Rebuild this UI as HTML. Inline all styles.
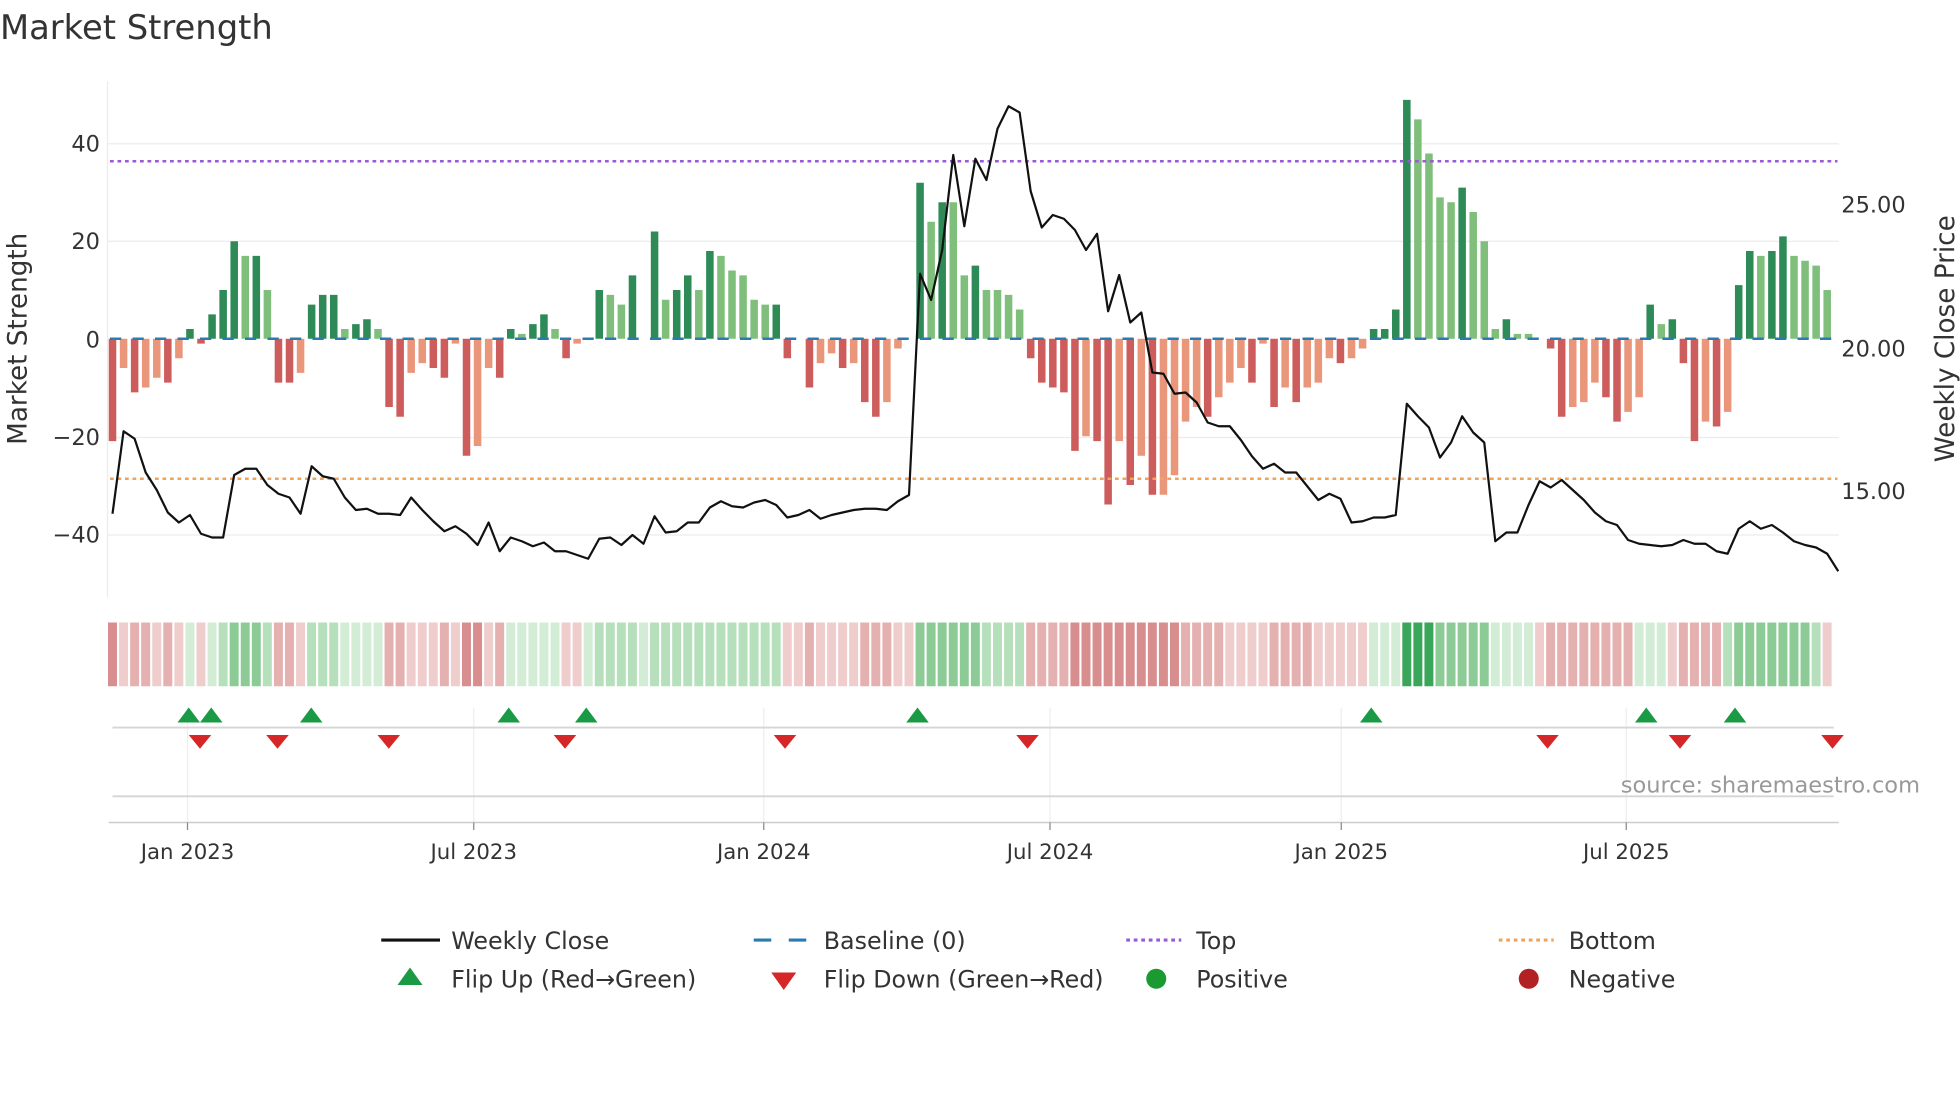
<!DOCTYPE html>
<html><head><meta charset="utf-8"><style>
html,body{margin:0;padding:0;background:#fff;width:1960px;height:1102px;overflow:hidden}
svg{display:block}
text{font-family:"DejaVu Sans","Liberation Sans",sans-serif;fill:#333}
.G{fill:#2e8b57}.g{fill:#7fbf7b}.R{fill:#cd5c5c}.r{fill:#e9967a}
.h5{fill:#3aa65a}.h4{fill:#8ccb95}.h3{fill:#b6dfbc}.h2{fill:#d3ecd6}
.n1{fill:#d88e8e}.n2{fill:#e5b0b0}.n3{fill:#efcdcd}
</style></head><body>
<svg width="1960" height="1102" viewBox="0 0 1568 881.6" xmlns="http://www.w3.org/2000/svg">
<rect width="1568" height="882" fill="#fff"/>
<text x="0" y="31" font-size="27">Market Strength</text>
<g stroke="#ececec" stroke-width="1">
<line x1="86" x2="1471" y1="115" y2="115"/><line x1="86" x2="1471" y1="193" y2="193"/>
<line x1="86" x2="1471" y1="350" y2="350"/><line x1="86" x2="1471" y1="428" y2="428"/>
<line x1="86" x2="86" y1="65" y2="478"/>
</g>
<g font-size="18" text-anchor="end">
<text x="80" y="121">40</text><text x="80" y="199">20</text><text x="80" y="278">0</text>
<text x="80" y="356">−20</text><text x="80" y="434">−40</text>
</g>
<g font-size="18">
<text x="1473" y="170">25.00</text><text x="1473" y="285">20.00</text><text x="1473" y="399">15.00</text>
</g>
<text font-size="21" transform="translate(21,271) rotate(-90)" text-anchor="middle">Market Strength</text>
<text font-size="21" transform="translate(1563,271) rotate(-90)" text-anchor="middle">Weekly Close Price</text>

<g transform="translate(87,271) scale(8.85,-3.9)">
<rect class="R" x="0" y="-21" width=".68" height="21"/>
<rect class="r" x="1" y="-6" width=".68" height="6"/>
<rect class="R" x="2" y="-11" width=".68" height="11"/>
<rect class="r" x="3" y="-10" width=".68" height="10"/>
<rect class="r" x="4" y="-8" width=".68" height="8"/>
<rect class="R" x="5" y="-9" width=".68" height="9"/>
<rect class="r" x="6" y="-4" width=".68" height="4"/>
<rect class="G" x="7" y="0" width=".68" height="2"/>
<rect class="R" x="8" y="-1" width=".68" height="1"/>
<rect class="G" x="9" y="0" width=".68" height="5"/>
<rect class="G" x="10" y="0" width=".68" height="10"/>
<rect class="G" x="11" y="0" width=".68" height="20"/>
<rect class="g" x="12" y="0" width=".68" height="17"/>
<rect class="G" x="13" y="0" width=".68" height="17"/>
<rect class="g" x="14" y="0" width=".68" height="10"/>
<rect class="R" x="15" y="-9" width=".68" height="9"/>
<rect class="R" x="16" y="-9" width=".68" height="9"/>
<rect class="r" x="17" y="-7" width=".68" height="7"/>
<rect class="G" x="18" y="0" width=".68" height="7"/>
<rect class="G" x="19" y="0" width=".68" height="9"/>
<rect class="G" x="20" y="0" width=".68" height="9"/>
<rect class="g" x="21" y="0" width=".68" height="2"/>
<rect class="G" x="22" y="0" width=".68" height="3"/>
<rect class="G" x="23" y="0" width=".68" height="4"/>
<rect class="g" x="24" y="0" width=".68" height="2"/>
<rect class="R" x="25" y="-14" width=".68" height="14"/>
<rect class="R" x="26" y="-16" width=".68" height="16"/>
<rect class="r" x="27" y="-7" width=".68" height="7"/>
<rect class="r" x="28" y="-5" width=".68" height="5"/>
<rect class="R" x="29" y="-6" width=".68" height="6"/>
<rect class="R" x="30" y="-8" width=".68" height="8"/>
<rect class="r" x="31" y="-1" width=".68" height="1"/>
<rect class="R" x="32" y="-24" width=".68" height="24"/>
<rect class="r" x="33" y="-22" width=".68" height="22"/>
<rect class="r" x="34" y="-6" width=".68" height="6"/>
<rect class="R" x="35" y="-8" width=".68" height="8"/>
<rect class="G" x="36" y="0" width=".68" height="2"/>
<rect class="g" x="37" y="0" width=".68" height="1"/>
<rect class="G" x="38" y="0" width=".68" height="3"/>
<rect class="G" x="39" y="0" width=".68" height="5"/>
<rect class="g" x="40" y="0" width=".68" height="2"/>
<rect class="R" x="41" y="-4" width=".68" height="4"/>
<rect class="r" x="42" y="-1" width=".68" height="1"/>
<rect class="G" x="44" y="0" width=".68" height="10"/>
<rect class="g" x="45" y="0" width=".68" height="9"/>
<rect class="g" x="46" y="0" width=".68" height="7"/>
<rect class="G" x="47" y="0" width=".68" height="13"/>
<rect class="G" x="49" y="0" width=".68" height="22"/>
<rect class="g" x="50" y="0" width=".68" height="8"/>
<rect class="G" x="51" y="0" width=".68" height="10"/>
<rect class="G" x="52" y="0" width=".68" height="13"/>
<rect class="g" x="53" y="0" width=".68" height="10"/>
<rect class="G" x="54" y="0" width=".68" height="18"/>
<rect class="g" x="55" y="0" width=".68" height="17"/>
<rect class="g" x="56" y="0" width=".68" height="14"/>
<rect class="g" x="57" y="0" width=".68" height="13"/>
<rect class="g" x="58" y="0" width=".68" height="8"/>
<rect class="g" x="59" y="0" width=".68" height="7"/>
<rect class="G" x="60" y="0" width=".68" height="7"/>
<rect class="R" x="61" y="-4" width=".68" height="4"/>
<rect class="R" x="63" y="-10" width=".68" height="10"/>
<rect class="r" x="64" y="-5" width=".68" height="5"/>
<rect class="r" x="65" y="-3" width=".68" height="3"/>
<rect class="R" x="66" y="-6" width=".68" height="6"/>
<rect class="r" x="67" y="-5" width=".68" height="5"/>
<rect class="R" x="68" y="-13" width=".68" height="13"/>
<rect class="R" x="69" y="-16" width=".68" height="16"/>
<rect class="r" x="70" y="-13" width=".68" height="13"/>
<rect class="r" x="71" y="-2" width=".68" height="2"/>
<rect class="G" x="73" y="0" width=".68" height="32"/>
<rect class="g" x="74" y="0" width=".68" height="24"/>
<rect class="G" x="75" y="0" width=".68" height="28"/>
<rect class="g" x="76" y="0" width=".68" height="28"/>
<rect class="g" x="77" y="0" width=".68" height="13"/>
<rect class="G" x="78" y="0" width=".68" height="15"/>
<rect class="g" x="79" y="0" width=".68" height="10"/>
<rect class="g" x="80" y="0" width=".68" height="10"/>
<rect class="g" x="81" y="0" width=".68" height="9"/>
<rect class="g" x="82" y="0" width=".68" height="6"/>
<rect class="R" x="83" y="-4" width=".68" height="4"/>
<rect class="R" x="84" y="-9" width=".68" height="9"/>
<rect class="R" x="85" y="-10" width=".68" height="10"/>
<rect class="R" x="86" y="-11" width=".68" height="11"/>
<rect class="R" x="87" y="-23" width=".68" height="23"/>
<rect class="r" x="88" y="-20" width=".68" height="20"/>
<rect class="R" x="89" y="-21" width=".68" height="21"/>
<rect class="R" x="90" y="-34" width=".68" height="34"/>
<rect class="r" x="91" y="-21" width=".68" height="21"/>
<rect class="R" x="92" y="-30" width=".68" height="30"/>
<rect class="r" x="93" y="-24" width=".68" height="24"/>
<rect class="R" x="94" y="-32" width=".68" height="32"/>
<rect class="r" x="95" y="-32" width=".68" height="32"/>
<rect class="r" x="96" y="-28" width=".68" height="28"/>
<rect class="r" x="97" y="-17" width=".68" height="17"/>
<rect class="r" x="98" y="-14" width=".68" height="14"/>
<rect class="R" x="99" y="-16" width=".68" height="16"/>
<rect class="r" x="100" y="-12" width=".68" height="12"/>
<rect class="r" x="101" y="-9" width=".68" height="9"/>
<rect class="r" x="102" y="-6" width=".68" height="6"/>
<rect class="R" x="103" y="-9" width=".68" height="9"/>
<rect class="r" x="104" y="-1" width=".68" height="1"/>
<rect class="R" x="105" y="-14" width=".68" height="14"/>
<rect class="r" x="106" y="-10" width=".68" height="10"/>
<rect class="R" x="107" y="-13" width=".68" height="13"/>
<rect class="r" x="108" y="-10" width=".68" height="10"/>
<rect class="r" x="109" y="-9" width=".68" height="9"/>
<rect class="r" x="110" y="-4" width=".68" height="4"/>
<rect class="R" x="111" y="-5" width=".68" height="5"/>
<rect class="r" x="112" y="-4" width=".68" height="4"/>
<rect class="r" x="113" y="-2" width=".68" height="2"/>
<rect class="G" x="114" y="0" width=".68" height="2"/>
<rect class="G" x="115" y="0" width=".68" height="2"/>
<rect class="G" x="116" y="0" width=".68" height="6"/>
<rect class="G" x="117" y="0" width=".68" height="49"/>
<rect class="g" x="118" y="0" width=".68" height="45"/>
<rect class="g" x="119" y="0" width=".68" height="38"/>
<rect class="g" x="120" y="0" width=".68" height="29"/>
<rect class="g" x="121" y="0" width=".68" height="28"/>
<rect class="G" x="122" y="0" width=".68" height="31"/>
<rect class="g" x="123" y="0" width=".68" height="26"/>
<rect class="g" x="124" y="0" width=".68" height="20"/>
<rect class="g" x="125" y="0" width=".68" height="2"/>
<rect class="G" x="126" y="0" width=".68" height="4"/>
<rect class="g" x="127" y="0" width=".68" height="1"/>
<rect class="g" x="128" y="0" width=".68" height="1"/>
<rect class="R" x="130" y="-2" width=".68" height="2"/>
<rect class="R" x="131" y="-16" width=".68" height="16"/>
<rect class="r" x="132" y="-14" width=".68" height="14"/>
<rect class="r" x="133" y="-13" width=".68" height="13"/>
<rect class="r" x="134" y="-9" width=".68" height="9"/>
<rect class="R" x="135" y="-12" width=".68" height="12"/>
<rect class="R" x="136" y="-17" width=".68" height="17"/>
<rect class="r" x="137" y="-15" width=".68" height="15"/>
<rect class="r" x="138" y="-12" width=".68" height="12"/>
<rect class="G" x="139" y="0" width=".68" height="7"/>
<rect class="g" x="140" y="0" width=".68" height="3"/>
<rect class="G" x="141" y="0" width=".68" height="4"/>
<rect class="R" x="142" y="-5" width=".68" height="5"/>
<rect class="R" x="143" y="-21" width=".68" height="21"/>
<rect class="r" x="144" y="-17" width=".68" height="17"/>
<rect class="R" x="145" y="-18" width=".68" height="18"/>
<rect class="r" x="146" y="-15" width=".68" height="15"/>
<rect class="G" x="147" y="0" width=".68" height="11"/>
<rect class="G" x="148" y="0" width=".68" height="18"/>
<rect class="g" x="149" y="0" width=".68" height="17"/>
<rect class="G" x="150" y="0" width=".68" height="18"/>
<rect class="G" x="151" y="0" width=".68" height="21"/>
<rect class="g" x="152" y="0" width=".68" height="17"/>
<rect class="g" x="153" y="0" width=".68" height="16"/>
<rect class="g" x="154" y="0" width=".68" height="15"/>
<rect class="g" x="155" y="0" width=".68" height="10"/>
</g>

<line x1="88" x2="1470" y1="271" y2="271" stroke="#2b7bb0" stroke-width="2" stroke-dasharray="9,9"/>
<line x1="88" x2="1470" y1="129" y2="129" stroke="#9b59d8" stroke-width="2" stroke-dasharray="3,3"/>
<line x1="88" x2="1470" y1="383" y2="383" stroke="#f0a35a" stroke-width="2" stroke-dasharray="3,3"/>

<polyline transform="translate(90,0) scale(8.85,1)" fill="none" stroke="#111" stroke-width="2.2" stroke-linejoin="round" vector-effect="non-scaling-stroke" points="0,411 1,345 2,351 3,378 4,392 5,410 6,418 7,412 8,427 9,430 10,430 11,380 12,375 13,375 14,388 15,395 16,398 17,411 18,373 19,381 20,383 21,398 22,408 23,407 24,411 25,411 26,412 27,398 28,408 29,417 30,425 31,421 32,427 33,436 34,418 35,441 36,430 37,433 38,437 39,434 40,441 41,441 42,444 43,447 44,431 45,430 46,436 47,428 48,435 49,413 50,426 51,425 52,418 53,418 54,406 55,401 56,405 57,406 58,402 59,400 60,404 61,414 62,412 63,408 64,415 65,412 66,410 67,408 68,407 69,407 70,408 71,401 72,396 73,219 74,240 75,200 76,124 77,181 78,127 79,144 80,103 81,85 82,90 83,153 84,182 85,172 86,175 87,184 88,200 89,187 90,249 91,220 92,258 93,250 94,298 95,299 96,315 97,314 98,322 99,338 100,341 101,341 102,352 103,365 104,375 105,371 106,378 107,378 108,389 109,400 110,395 111,399 112,418 113,417 114,414 115,414 116,412 117,323 118,333 119,342 120,366 121,354 122,333 123,346 124,354 125,433 126,426 127,426 128,404 129,385 130,390 131,384 132,392 133,400 134,410 135,417 136,420 137,432 138,435 139,436 140,437 141,436 142,432 143,435 144,435 145,441 146,443 147,423 148,417 149,423 150,420 151,426 152,433 153,436 154,438 155,443 156,457"/>

<g transform="translate(86.4,498) scale(8.85,1)">
<rect class="n1" x="0" width=".81" height="51"/><rect class="n3" x="1" width=".81" height="51"/><rect class="n2" x="2" width=".81" height="51"/><rect class="n2" x="3" width=".81" height="51"/><rect class="n3" x="4" width=".81" height="51"/><rect class="n2" x="5" width=".81" height="51"/><rect class="n3" x="6" width=".81" height="51"/><rect class="h2" x="7" width=".81" height="51"/><rect class="n3" x="8" width=".81" height="51"/><rect class="h2" x="9" width=".81" height="51"/><rect class="h3" x="10" width=".81" height="51"/><rect class="h4" x="11" width=".81" height="51"/><rect class="h4" x="12" width=".81" height="51"/><rect class="h4" x="13" width=".81" height="51"/><rect class="h3" x="14" width=".81" height="51"/><rect class="n2" x="15" width=".81" height="51"/><rect class="n2" x="16" width=".81" height="51"/><rect class="n3" x="17" width=".81" height="51"/><rect class="h3" x="18" width=".81" height="51"/><rect class="h3" x="19" width=".81" height="51"/><rect class="h3" x="20" width=".81" height="51"/><rect class="h2" x="21" width=".81" height="51"/><rect class="h2" x="22" width=".81" height="51"/><rect class="h2" x="23" width=".81" height="51"/><rect class="h2" x="24" width=".81" height="51"/><rect class="n2" x="25" width=".81" height="51"/><rect class="n2" x="26" width=".81" height="51"/><rect class="n3" x="27" width=".81" height="51"/><rect class="n3" x="28" width=".81" height="51"/><rect class="n3" x="29" width=".81" height="51"/><rect class="n2" x="30" width=".81" height="51"/><rect class="n3" x="31" width=".81" height="51"/><rect class="n1" x="32" width=".81" height="51"/><rect class="n1" x="33" width=".81" height="51"/><rect class="n3" x="34" width=".81" height="51"/><rect class="n2" x="35" width=".81" height="51"/><rect class="h2" x="36" width=".81" height="51"/><rect class="h2" x="37" width=".81" height="51"/><rect class="h2" x="38" width=".81" height="51"/><rect class="h2" x="39" width=".81" height="51"/><rect class="h2" x="40" width=".81" height="51"/><rect class="n3" x="41" width=".81" height="51"/><rect class="n3" x="42" width=".81" height="51"/><rect class="h2" x="43" width=".81" height="51"/><rect class="h3" x="44" width=".81" height="51"/><rect class="h3" x="45" width=".81" height="51"/><rect class="h3" x="46" width=".81" height="51"/><rect class="h3" x="47" width=".81" height="51"/><rect class="h2" x="48" width=".81" height="51"/><rect class="h3" x="49" width=".81" height="51"/><rect class="h3" x="50" width=".81" height="51"/><rect class="h3" x="51" width=".81" height="51"/><rect class="h3" x="52" width=".81" height="51"/><rect class="h3" x="53" width=".81" height="51"/><rect class="h3" x="54" width=".81" height="51"/><rect class="h3" x="55" width=".81" height="51"/><rect class="h3" x="56" width=".81" height="51"/><rect class="h3" x="57" width=".81" height="51"/><rect class="h3" x="58" width=".81" height="51"/><rect class="h3" x="59" width=".81" height="51"/><rect class="h3" x="60" width=".81" height="51"/><rect class="n3" x="61" width=".81" height="51"/><rect class="n3" x="62" width=".81" height="51"/><rect class="n2" x="63" width=".81" height="51"/><rect class="n3" x="64" width=".81" height="51"/><rect class="n3" x="65" width=".81" height="51"/><rect class="n3" x="66" width=".81" height="51"/><rect class="n3" x="67" width=".81" height="51"/><rect class="n2" x="68" width=".81" height="51"/><rect class="n2" x="69" width=".81" height="51"/><rect class="n2" x="70" width=".81" height="51"/><rect class="n3" x="71" width=".81" height="51"/><rect class="n3" x="72" width=".81" height="51"/><rect class="h4" x="73" width=".81" height="51"/><rect class="h4" x="74" width=".81" height="51"/><rect class="h4" x="75" width=".81" height="51"/><rect class="h4" x="76" width=".81" height="51"/><rect class="h4" x="77" width=".81" height="51"/><rect class="h4" x="78" width=".81" height="51"/><rect class="h3" x="79" width=".81" height="51"/><rect class="h3" x="80" width=".81" height="51"/><rect class="h3" x="81" width=".81" height="51"/><rect class="h3" x="82" width=".81" height="51"/><rect class="n2" x="83" width=".81" height="51"/><rect class="n2" x="84" width=".81" height="51"/><rect class="n2" x="85" width=".81" height="51"/><rect class="n2" x="86" width=".81" height="51"/><rect class="n1" x="87" width=".81" height="51"/><rect class="n1" x="88" width=".81" height="51"/><rect class="n1" x="89" width=".81" height="51"/><rect class="n1" x="90" width=".81" height="51"/><rect class="n1" x="91" width=".81" height="51"/><rect class="n1" x="92" width=".81" height="51"/><rect class="n1" x="93" width=".81" height="51"/><rect class="n1" x="94" width=".81" height="51"/><rect class="n1" x="95" width=".81" height="51"/><rect class="n1" x="96" width=".81" height="51"/><rect class="n2" x="97" width=".81" height="51"/><rect class="n2" x="98" width=".81" height="51"/><rect class="n2" x="99" width=".81" height="51"/><rect class="n2" x="100" width=".81" height="51"/><rect class="n3" x="101" width=".81" height="51"/><rect class="n3" x="102" width=".81" height="51"/><rect class="n3" x="103" width=".81" height="51"/><rect class="n3" x="104" width=".81" height="51"/><rect class="n2" x="105" width=".81" height="51"/><rect class="n2" x="106" width=".81" height="51"/><rect class="n2" x="107" width=".81" height="51"/><rect class="n2" x="108" width=".81" height="51"/><rect class="n3" x="109" width=".81" height="51"/><rect class="n3" x="110" width=".81" height="51"/><rect class="n3" x="111" width=".81" height="51"/><rect class="n3" x="112" width=".81" height="51"/><rect class="n3" x="113" width=".81" height="51"/><rect class="h2" x="114" width=".81" height="51"/><rect class="h2" x="115" width=".81" height="51"/><rect class="h2" x="116" width=".81" height="51"/><rect class="h5" x="117" width=".81" height="51"/><rect class="h5" x="118" width=".81" height="51"/><rect class="h5" x="119" width=".81" height="51"/><rect class="h4" x="120" width=".81" height="51"/><rect class="h4" x="121" width=".81" height="51"/><rect class="h4" x="122" width=".81" height="51"/><rect class="h4" x="123" width=".81" height="51"/><rect class="h4" x="124" width=".81" height="51"/><rect class="h2" x="125" width=".81" height="51"/><rect class="h2" x="126" width=".81" height="51"/><rect class="h2" x="127" width=".81" height="51"/><rect class="h2" x="128" width=".81" height="51"/><rect class="n3" x="129" width=".81" height="51"/><rect class="n2" x="130" width=".81" height="51"/><rect class="n2" x="131" width=".81" height="51"/><rect class="n2" x="132" width=".81" height="51"/><rect class="n2" x="133" width=".81" height="51"/><rect class="n2" x="134" width=".81" height="51"/><rect class="n2" x="135" width=".81" height="51"/><rect class="n2" x="136" width=".81" height="51"/><rect class="n2" x="137" width=".81" height="51"/><rect class="h2" x="138" width=".81" height="51"/><rect class="h2" x="139" width=".81" height="51"/><rect class="h2" x="140" width=".81" height="51"/><rect class="n3" x="141" width=".81" height="51"/><rect class="n2" x="142" width=".81" height="51"/><rect class="n2" x="143" width=".81" height="51"/><rect class="n2" x="144" width=".81" height="51"/><rect class="n2" x="145" width=".81" height="51"/><rect class="h3" x="146" width=".81" height="51"/><rect class="h4" x="147" width=".81" height="51"/><rect class="h4" x="148" width=".81" height="51"/><rect class="h4" x="149" width=".81" height="51"/><rect class="h4" x="150" width=".81" height="51"/><rect class="h4" x="151" width=".81" height="51"/><rect class="h4" x="152" width=".81" height="51"/><rect class="h4" x="153" width=".81" height="51"/><rect class="h3" x="154" width=".81" height="51"/><rect class="n3" x="155" width=".81" height="51"/>
</g>

<g stroke="#eee" stroke-width="1">
<line x1="150" x2="150" y1="566" y2="658"/><line x1="379" x2="379" y1="566" y2="658"/>
<line x1="611" x2="611" y1="566" y2="658"/><line x1="840" x2="840" y1="566" y2="658"/>
<line x1="1073" x2="1073" y1="566" y2="658"/><line x1="1301" x2="1301" y1="566" y2="658"/>
</g>
<line x1="90" x2="1467" y1="582" y2="582" stroke="#d5d5d5" stroke-width="1.5"/>
<line x1="90" x2="1467" y1="637" y2="637" stroke="#d5d5d5" stroke-width="1.5"/>
<line x1="87" x2="1471" y1="658" y2="658" stroke="#ccc" stroke-width="1.2"/>
<g fill="#1a9a45">
<polygon points="151,566 160,578 142,578"/><polygon points="169,566 178,578 160,578"/>
<polygon points="249,566 258,578 240,578"/><polygon points="407,566 416,578 398,578"/>
<polygon points="469,566 478,578 460,578"/><polygon points="734,566 743,578 725,578"/>
<polygon points="1097,566 1106,578 1088,578"/><polygon points="1317,566 1326,578 1308,578"/>
<polygon points="1388,566 1397,578 1379,578"/>
</g>
<g fill="#d62728">
<polygon points="151,588 169,588 160,599"/><polygon points="213,588 231,588 222,599"/>
<polygon points="302,588 320,588 311,599"/><polygon points="443,588 461,588 452,599"/>
<polygon points="619,588 637,588 628,599"/><polygon points="813,588 831,588 822,599"/>
<polygon points="1229,588 1247,588 1238,599"/><polygon points="1335,588 1353,588 1344,599"/>
<polygon points="1457,588 1475,588 1466,599"/>
</g>
<text x="1536" y="634" font-size="18" text-anchor="end" style="fill:#999">source: sharemaestro.com</text>
<g stroke="#888" stroke-width="1">
<line x1="150" x2="150" y1="658" y2="664"/><line x1="379" x2="379" y1="658" y2="664"/>
<line x1="611" x2="611" y1="658" y2="664"/><line x1="840" x2="840" y1="658" y2="664"/>
<line x1="1073" x2="1073" y1="658" y2="664"/><line x1="1301" x2="1301" y1="658" y2="664"/>
</g>
<g font-size="17" text-anchor="middle">
<text x="150" y="687">Jan 2023</text><text x="379" y="687">Jul 2023</text><text x="611" y="687">Jan 2024</text>
<text x="840" y="687">Jul 2024</text><text x="1073" y="687">Jan 2025</text><text x="1301" y="687">Jul 2025</text>
</g>
<g font-size="19">
<line x1="305" x2="352" y1="752" y2="752" stroke="#111" stroke-width="2.5"/>
<text x="361" y="759">Weekly Close</text>
<line x1="603" x2="617" y1="752" y2="752" stroke="#2b7bb0" stroke-width="2.5"/>
<line x1="631" x2="645" y1="752" y2="752" stroke="#2b7bb0" stroke-width="2.5"/>
<text x="659" y="759">Baseline (0)</text>
<line x1="901" x2="945" y1="752" y2="752" stroke="#9b59d8" stroke-width="2.5" stroke-dasharray="3,3"/>
<text x="957" y="759">Top</text>
<line x1="1199" x2="1243" y1="752" y2="752" stroke="#f0a35a" stroke-width="2.5" stroke-dasharray="3,3"/>
<text x="1255" y="759">Bottom</text>
<polygon points="328,774 338,788 318,788" fill="#1a9a45"/>
<text x="361" y="790">Flip Up (Red→Green)</text>
<polygon points="617,778 637,778 627,792" fill="#d62728"/>
<text x="659" y="790">Flip Down (Green→Red)</text>
<circle cx="925" cy="783" r="8" fill="#1a9a30"/>
<text x="957" y="790">Positive</text>
<circle cx="1223" cy="783" r="8" fill="#b22222"/>
<text x="1255" y="790">Negative</text>
</g>
</svg>
</body></html>
